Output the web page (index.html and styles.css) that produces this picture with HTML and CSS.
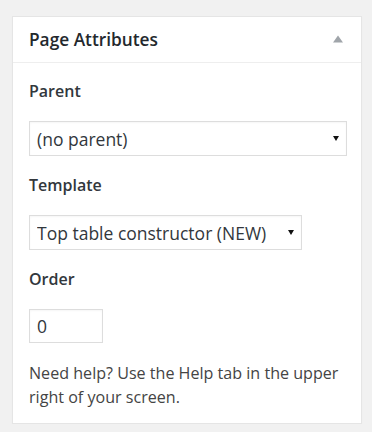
FILE: index.html
```html
<!DOCTYPE html>
<html>
<head>
<meta charset="utf-8">
<link rel="stylesheet" href="styles.css">
</head>
<body>
<div class="postbox">
  <div class="postbox-header">
    <h2 class="hndle">Page Attributes</h2>
    <svg class="toggle" width="10" height="8" viewBox="0 0 10 8"><polygon points="5,0.5 10,7.5 0,7.5" fill="#a0a5aa"/></svg>
  </div>
  <div class="inside">
    <p class="label">Parent</p>
    <div class="select-wrap wide">
      <select class="select"><option>(no parent)</option></select>
      <svg class="caret" width="6" height="5" viewBox="0 0 6 5"><polygon points="0,0 6,0 3,5" fill="#111"/></svg>
    </div>
    <p class="label">Template</p>
    <div class="select-wrap narrow">
      <select class="select"><option>Top table constructor (NEW)</option></select>
      <svg class="caret" width="6" height="5" viewBox="0 0 6 5"><polygon points="0,0 6,0 3,5" fill="#111"/></svg>
    </div>
    <p class="label">Order</p>
    <input class="order" type="text" value="0">
    <p class="help">Need help? Use the Help tab in the upper right of your screen.</p>
  </div>
</div>
</body>
</html>
```

FILE: styles.css
```css
html, body {
  margin: 0;
  padding: 0;
  background: #f1f1f1;
}
body {
  padding: 16px 10px 0 12px;
  font-family: "Open Sans", "Liberation Sans", sans-serif;
}
.postbox {
  width: 348px;
  background: #fff;
  border: 1px solid #e5e5e5;
  box-shadow: 0 1px 1px rgba(0,0,0,0.04);
}
.postbox-header {
  display: flex;
  align-items: center;
  justify-content: space-between;
  height: 45px;
  border-bottom: 1px solid #eee;
  padding: 0 18px 0 16px;
}
.hndle {
  margin: 0;
  font-size: 17.3px;
  font-weight: 600;
  color: #23282d;
  line-height: 24px;
  padding-top: 1px;
}
.toggle {
  display: block;
  margin-top: -2px;
}
.inside {
  padding: 16px 16px 14px 16px;
}
.label {
  margin: 0 0 18px 0;
  font-size: 16px;
  line-height: 24px;
  font-weight: 600;
  color: #32373c;
}
.select-wrap {
  position: relative;
  margin-bottom: 17px;
}
.select-wrap.wide { width: 318px; }
.select-wrap.narrow { width: 273px; }
.select {
  -webkit-appearance: none;
  appearance: none;
  display: block;
  width: 100%;
  height: 35px;
  margin: 0;
  border: 1px solid #ddd;
  border-radius: 0;
  background: #fff;
  padding: 0 24px 0 7px;
  font-family: "Open Sans", "Liberation Sans", sans-serif;
  font-size: 17.5px;
  color: #32373c;
  box-shadow: inset 0 1px 2px rgba(0,0,0,0.04);
  outline: none;
}
.caret {
  position: absolute;
  right: 8px;
  top: 15px;
  pointer-events: none;
}
.order {
  display: block;
  box-sizing: border-box;
  width: 74px;
  height: 34px;
  margin: 0 0 18px 0;
  border: 1px solid #ddd;
  border-radius: 0;
  padding: 0 7px;
  font-family: "Open Sans", "Liberation Sans", sans-serif;
  font-size: 17.5px;
  color: #32373c;
  box-shadow: inset 0 1px 2px rgba(0,0,0,0.04);
  outline: none;
}
.help {
  margin: 0;
  font-size: 16.1px;
  line-height: 24px;
  color: #444;
}
```
